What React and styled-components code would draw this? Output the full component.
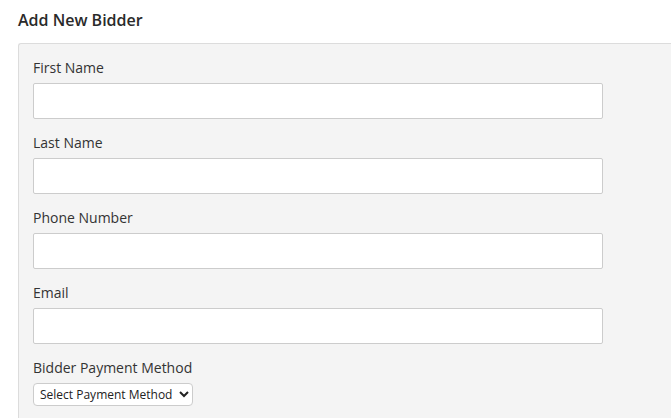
import React from "react";
import styled, { createGlobalStyle } from "styled-components";

const GlobalStyle = createGlobalStyle`
  body {
    margin: 0;
    background: #fff;
    font-family: "Open Sans", "Liberation Sans", sans-serif;
    color: #333;
  }
`;

const Page = styled.div`
  padding: 9px 0 0 18px;
`;

const Title = styled.h2`
  margin: 0 0 12px;
  font-size: 16px;
  font-weight: 600;
  line-height: 22px;
  color: #2a2a2a;
`;

const Panel = styled.div`
  background: #f4f4f4;
  border: 1px solid #dcdcdc;
  border-right: none;
  border-radius: 3px 0 0 0;
  padding: 14px 0 20px 14px;
`;

const Field = styled.div`
  display: flex;
  flex-direction: column;
  align-items: flex-start;
  margin-bottom: 14px;
`;

const Label = styled.label`
  font-size: 14px;
  line-height: 20px;
  color: #333;
  margin-bottom: 5px;
`;

const Input = styled.input`
  box-sizing: border-box;
  width: 570px;
  height: 36px;
  border: 1px solid #ccc;
  border-radius: 2px;
  background: #fff;
  font-family: inherit;
  font-size: 14px;
  padding: 0 8px;
`;

const Select = styled.select`
  box-sizing: border-box;
  width: 160px;
  height: 23px;
  border: 1px solid #ccc;
  border-radius: 4px;
  background: #fff;
  font-family: inherit;
  font-size: 12px;
  color: #222;
  padding: 0 2px;
`;

const fields = ["First Name", "Last Name", "Phone Number", "Email"];

const App = () => {
  return (
    <Page>
      <GlobalStyle />
      <Title>Add New Bidder</Title>
      <Panel>
        {fields.map((f) => (
          <Field key={f}>
            <Label>{f}</Label>
            <Input type="text" />
          </Field>
        ))}
        <Field>
          <Label>Bidder Payment Method</Label>
          <Select defaultValue="">
            <option value="">Select Payment Method</option>
            <option value="card">Credit Card</option>
            <option value="cash">Cash</option>
          </Select>
        </Field>
      </Panel>
    </Page>
  );
};

export default App;
